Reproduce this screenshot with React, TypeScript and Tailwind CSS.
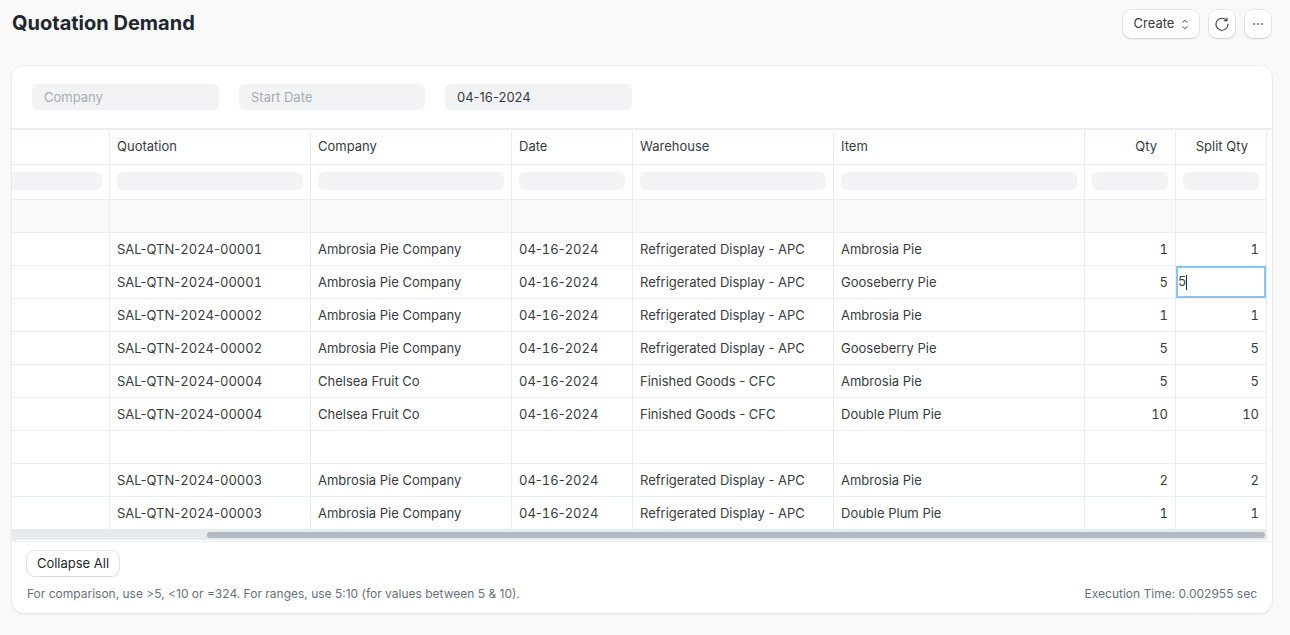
import React from 'react';

interface Row {
  quotation: string;
  company: string;
  warehouse: string;
  item: string;
  qty: number;
  split: number;
  editing?: boolean;
}

const columns = 'grid grid-cols-[98px_201px_201px_121px_201px_251px_91px_91px] w-[1255px]';
const cellBorder = 'border-r border-[#ebeef0]';
const buttonShadow = 'shadow-[0_0_0_1px_rgba(0,0,0,0.06),0_1px_2px_rgba(0,0,0,0.12)]';

const rows: Row[] = [
  { quotation: 'SAL-QTN-2024-00001', company: 'Ambrosia Pie Company', warehouse: 'Refrigerated Display - APC', item: 'Ambrosia Pie', qty: 1, split: 1 },
  { quotation: 'SAL-QTN-2024-00001', company: 'Ambrosia Pie Company', warehouse: 'Refrigerated Display - APC', item: 'Gooseberry Pie', qty: 5, split: 5, editing: true },
  { quotation: 'SAL-QTN-2024-00002', company: 'Ambrosia Pie Company', warehouse: 'Refrigerated Display - APC', item: 'Ambrosia Pie', qty: 1, split: 1 },
  { quotation: 'SAL-QTN-2024-00002', company: 'Ambrosia Pie Company', warehouse: 'Refrigerated Display - APC', item: 'Gooseberry Pie', qty: 5, split: 5 },
  { quotation: 'SAL-QTN-2024-00004', company: 'Chelsea Fruit Co', warehouse: 'Finished Goods - CFC', item: 'Ambrosia Pie', qty: 5, split: 5 },
  { quotation: 'SAL-QTN-2024-00004', company: 'Chelsea Fruit Co', warehouse: 'Finished Goods - CFC', item: 'Double Plum Pie', qty: 10, split: 10 },
];

const lastRows: Row[] = [
  { quotation: 'SAL-QTN-2024-00003', company: 'Ambrosia Pie Company', warehouse: 'Refrigerated Display - APC', item: 'Ambrosia Pie', qty: 2, split: 2 },
  { quotation: 'SAL-QTN-2024-00003', company: 'Ambrosia Pie Company', warehouse: 'Refrigerated Display - APC', item: 'Double Plum Pie', qty: 1, split: 1 },
];

// only the digit runs are tabular, the hyphens stay proportional
const Digits: React.FC<{ text: string }> = ({ text }) => (
  <span>
    {text.split(/(\d+)/).map((part, i) =>
      /\d/.test(part) ? <span key={i} className="tabular-nums">{part}</span> : part
    )}
  </span>
);

const DataRow: React.FC<{ row: Row }> = ({ row }) => {
  const cell = `${cellBorder} flex items-center pl-[7px] pr-2 pt-px truncate`;
  return (
    <div className={`${columns} h-[33px] border-b border-[#ebeef0] text-[13px] text-[#383c41]`}>
      <div className={cellBorder} />
      <div className={cell}><Digits text={row.quotation} /></div>
      <div className={cell}>{row.company}</div>
      <div className={cell}><Digits text="04-16-2024" /></div>
      <div className={cell}>{row.warehouse}</div>
      <div className={cell}>{row.item}</div>
      <div className={`${cellBorder} flex items-center justify-end pr-[7px] pt-px tabular-nums`}>{row.qty}</div>
      {row.editing ? (
        <div className={cellBorder}>
          <div className="h-[32px] border-2 border-[#8fc2f0] flex items-center">
            <span className="tabular-nums">5</span>
            <span className="w-px h-[15px] bg-[#1f272e]" />
          </div>
        </div>
      ) : (
        <div className={`${cellBorder} flex items-center justify-end pr-[7px] pt-px tabular-nums`}>{row.split}</div>
      )}
    </div>
  );
};

const EmptyRow: React.FC<{ shaded?: boolean }> = ({ shaded }) => (
  <div className={`${columns} h-[33px] border-b border-[#ebeef0] ${shaded ? 'bg-[#f8f9f8]' : ''}`}>
    {[0, 1, 2, 3, 4, 5, 6, 7].map(i => (
      <div key={i} className={cellBorder} />
    ))}
  </div>
);

const App: React.FC = () => {
  const headers = ['Quotation', 'Company', 'Date', 'Warehouse', 'Item'];

  return (
    <div className="w-[1290px] h-[635px] overflow-hidden bg-[#f8f9f8] text-[#383c41] font-['Inter',sans-serif]">
      {/* Header */}
      <div className="flex items-start justify-between pl-3 pr-[19px] pt-[9px] h-[66px]">
        <h1 className="text-[20px] leading-[28px] font-bold text-[#1f272e]">Quotation Demand</h1>
        <div className="flex gap-[10px] mt-px">
          <button className={`h-[28px] w-[76px] flex items-center justify-center gap-2 bg-white rounded-lg text-[13px] text-[#383c41] ${buttonShadow}`}>
            Create
            <svg width="6" height="11" viewBox="0 0 6 11" fill="none" stroke="#383c41" strokeWidth="1" strokeLinecap="round" strokeLinejoin="round">
              <path d="M1 3.2 3 1.2 5 3.2" />
              <path d="M1 7.8 3 9.8 5 7.8" />
            </svg>
          </button>
          <button className={`h-[28px] w-[26px] flex items-center justify-center bg-white rounded-lg ${buttonShadow}`}>
            <svg width="14" height="14" viewBox="0 0 14 14" fill="none" stroke="#383c41" strokeWidth="1.1" strokeLinecap="round" strokeLinejoin="round">
              <path d="M11.6 3.4A6 6 0 1 0 13 7" />
              <path d="M12 1v2.8H9.2" />
            </svg>
          </button>
          <button className={`h-[28px] w-[26px] flex items-center justify-center gap-[2px] bg-white rounded-lg ${buttonShadow}`}>
            <span className="w-[2px] h-[2px] rounded-full bg-[#687178]" />
            <span className="w-[2px] h-[2px] rounded-full bg-[#687178]" />
            <span className="w-[2px] h-[2px] rounded-full bg-[#687178]" />
          </button>
        </div>
      </div>

      {/* Report card */}
      <div className="mx-3 w-[1260px] h-[547px] bg-white rounded-xl shadow-[0_0_0_1px_rgba(0,0,0,0.03),0_1px_3px_rgba(0,0,0,0.08)] overflow-hidden flex flex-col">
        {/* Filters */}
        <div className="h-[64px] flex gap-5 pl-5 pt-[18px] border-b-2 border-[#ebeef0] text-[13px] shrink-0">
          <div className="w-[187px] h-[26px] rounded-md bg-[#f2f3f5] pl-3 pt-px flex items-center text-[#a6acb3]">Company</div>
          <div className="w-[186px] h-[26px] rounded-md bg-[#f2f3f5] pl-3 pt-px flex items-center text-[#a6acb3]">Start Date</div>
          <div className="w-[187px] h-[26px] rounded-md bg-[#f2f3f5] pl-3 pt-px flex items-center text-[#383c41]">04-16-2024</div>
        </div>

        {/* Table */}
        <div className="flex-1 overflow-hidden">
          <div className={`${columns} h-[35px] border-b border-[#ebeef0] text-[13px] text-[#383c41]`}>
            <div className={cellBorder} />
            {headers.map(h => (
              <div key={h} className={`${cellBorder} flex items-center pl-[7px]`}>{h}</div>
            ))}
            <div className={`${cellBorder} flex items-center justify-end pr-[18px]`}>Qty</div>
            <div className={`${cellBorder} flex items-center justify-end pr-[18px]`}>Split Qty</div>
          </div>

          <div className={`${columns} h-[35px] border-b border-[#ebeef0]`}>
            <div className={`${cellBorder} flex items-center pr-[7px] pb-[2px]`}>
              <div className="w-full h-[18px] bg-[#f2f3f5] rounded-r-md" />
            </div>
            {[0, 1, 2, 3, 4, 5, 6].map(i => (
              <div key={i} className={`${cellBorder} flex items-center px-[7px] pb-[2px]`}>
                <div className="w-full h-[18px] bg-[#f2f3f5] rounded-md" />
              </div>
            ))}
          </div>

          <EmptyRow shaded />
          {rows.map((r, i) => (
            <DataRow key={i} row={r} />
          ))}
          <EmptyRow />
          {lastRows.map((r, i) => (
            <DataRow key={i} row={r} />
          ))}

          {/* Scrollbar */}
          <div className="h-[11px] w-[1255px] bg-[#e8ebee] flex items-center pl-[195px] pr-[2px] -mt-px">
            <div className="h-[6px] w-full rounded-full bg-[#b2bac3]" />
          </div>
        </div>

        {/* Footer */}
        <div className="h-[72px] shrink-0 border-t border-[#ebeef0] px-[14px] pt-[9px] flex flex-col">
          <button className="self-start ml-px h-[25px] w-[92px] rounded-lg bg-white text-[13px] text-[#1f272e] shadow-[0_0_0_1px_rgba(0,0,0,0.1),0_1px_2px_rgba(0,0,0,0.06)]">
            Collapse All
          </button>
          <div className="mt-2 pl-px flex justify-between text-[12px] leading-[20px] text-[#687178] pr-[1px]">
            <span>For comparison, use &gt;5, &lt;10 or =324. For ranges, use 5:10 (for values between 5 &amp; 10).</span>
            <span>Execution Time: 0.002955 sec</span>
          </div>
        </div>
      </div>
    </div>
  );
};

export default App;
